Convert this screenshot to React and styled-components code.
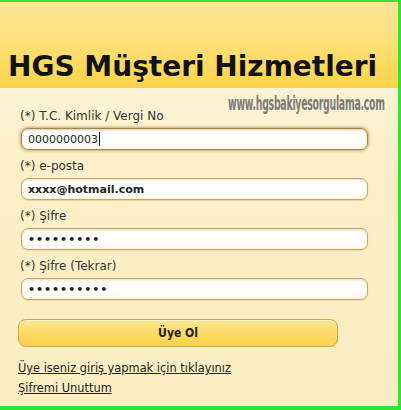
import React from 'react';
import styled, { createGlobalStyle } from 'styled-components';

const GlobalStyle = createGlobalStyle`
  html, body {
    margin: 0;
    padding: 0;
    background: #fff;
  }
`;

const Frame = styled.div`
  width: 401px;
  height: 410px;
  box-sizing: border-box;
  border-top: 2px solid #33e633;
  border-right: 3px solid #2ee62e;
  border-bottom: 4px solid #2ee62e;
  display: flex;
  flex-direction: column;
  background: linear-gradient(180deg, #fef7e2 0%, #fdf0c9 40%, #fceec2 100%);
  font-family: "DejaVu Sans", Verdana, sans-serif;
  overflow: hidden;
`;

const Header = styled.div`
  height: 86px;
  box-sizing: border-box;
  padding: 0 0 4px 8px;
  display: flex;
  align-items: flex-end;
  background: linear-gradient(180deg, #fde796 0%, #fde07a 45%, #fbd448 100%);
  border-bottom: 1px solid #f1cf6a;
`;

const Title = styled.h1`
  margin: 0;
  font-family: "DejaVu Sans", Verdana, sans-serif;
  font-weight: bold;
  font-size: 28px;
  color: #111;
`;

const Body = styled.div`
  position: relative;
  flex: 1;
  display: flex;
  flex-direction: column;
  padding: 21px 30px 0 18px;
`;

const Watermark = styled.div`
  position: absolute;
  top: 4px;
  left: 228px;
  font-family: "DejaVu Sans Condensed", "DejaVu Sans", sans-serif;
  font-weight: bold;
  font-size: 20px;
  line-height: 22px;
  color: #7a7a7a;
  letter-spacing: -0.5px;
  transform: scaleX(0.52);
  transform-origin: left top;
  white-space: nowrap;
`;

const Field = styled.div`
  display: flex;
  flex-direction: column;
  gap: 5px;
  margin-bottom: 9px;
`;

const Label = styled.label`
  padding-left: 2px;
  font-size: 12px;
  color: #333;
  line-height: 14px;
`;

const Input = styled.div`
  height: 22px;
  box-sizing: border-box;
  margin-left: 3px;
  padding: 0 6px;
  display: flex;
  align-items: center;
  border: 1px solid ${(p) => (p.$focused ? '#a5864a' : '#c6a862')};
  border-radius: 7px;
  background: linear-gradient(180deg, #fffdf6 0%, #ffffff 60%, #fdf8ea 100%);
  box-shadow: ${(p) =>
    p.$focused
      ? '0 0 3px 1px rgba(150, 110, 40, 0.55), inset 0 1px 2px rgba(120, 90, 30, 0.3)'
      : 'inset 0 1px 2px rgba(150, 120, 50, 0.25), 0 1px 1px rgba(200, 170, 90, 0.35)'};
  font-size: 11px;
  font-weight: ${(p) => (p.$bold ? 'bold' : 'normal')};
  color: #222;
  letter-spacing: ${(p) => (p.$dots ? '1px' : '0')};
`;

const Caret = styled.span`
  display: inline-block;
  width: 1px;
  height: 14px;
  background: #111;
  margin-left: 1px;
`;

const Button = styled.button`
  margin: 10px 0 0 0;
  width: 320px;
  height: 28px;
  border: 1px solid #d1a83e;
  border-radius: 8px;
  background: linear-gradient(180deg, #fde89a 0%, #fcdc6c 40%, #fbd24a 100%);
  box-shadow: inset 0 1px 0 rgba(255, 255, 255, 0.5);
  font-family: "DejaVu Sans Condensed", "DejaVu Sans", sans-serif;
  font-weight: bold;
  font-size: 12px;
  color: #222;
`;

const Links = styled.div`
  margin-top: 14px;
  display: flex;
  flex-direction: column;
  gap: 6px;
`;

const Link = styled.a`
  font-size: 11.4px;
  color: #222;
  text-decoration: underline;
  line-height: 14px;
`;

const fields = [
  { label: '(*) T.C. Kimlik / Vergi No', value: '0000000003', focused: true },
  { label: '(*) e-posta', value: 'xxxx@hotmail.com', bold: true },
  { label: '(*) Şifre', value: '•••••••••', bold: true, dots: true },
  { label: '(*) Şifre (Tekrar)', value: '••••••••••', bold: true, dots: true },
];

export default function App() {
  return (
    <>
      <GlobalStyle />
      <Frame>
        <Header>
          <Title>HGS Müşteri Hizmetleri</Title>
        </Header>
        <Body>
          <Watermark>www.hgsbakiyesorgulama.com</Watermark>
          {fields.map((f) => (
            <Field key={f.label}>
              <Label>{f.label}</Label>
              <Input $focused={f.focused} $bold={f.bold} $dots={f.dots}>
                {f.value}
                {f.focused && <Caret />}
              </Input>
            </Field>
          ))}
          <Button>Üye Ol</Button>
          <Links>
            <Link>Üye iseniz giriş yapmak için tıklayınız</Link>
            <Link>Şifremi Unuttum</Link>
          </Links>
        </Body>
      </Frame>
    </>
  );
}
